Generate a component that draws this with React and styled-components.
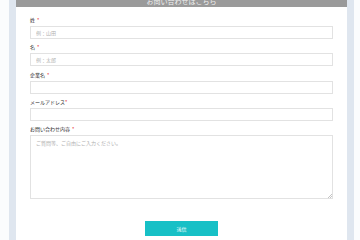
import React from "react";
import styled, { createGlobalStyle } from "styled-components";

const GlobalStyle = createGlobalStyle`
  html, body {
    margin: 0;
    padding: 0;
    background: #fbfcfd;
    font-family: "Noto Sans CJK JP", "Noto Sans", sans-serif;
  }
  * { box-sizing: border-box; }
`;

const Page = styled.div`
  width: 360px;
  height: 240px;
  overflow: hidden;
  padding-left: 9px;
`;

const Frame = styled.div`
  width: 345px;
  min-height: 240px;
  border-left: 7px solid #dfe6ef;
  border-right: 7px solid #dfe6ef;
  background: #ffffff;
`;

const Header = styled.div`
  height: 7px;
  background: #9a9a9a;
  color: #f2f2f2;
  font-size: 7px;
  line-height: 7px;
  text-align: center;
  overflow: hidden;
  span {
    display: block;
    margin-top: -2px;
  }
`;

const Form = styled.form`
  padding: 9px 14px 0 14px;
  display: flex;
  flex-direction: column;
`;

const Field = styled.div`
  display: flex;
  flex-direction: column;
  gap: 2px;
  margin-bottom: ${({ $last }) => ($last ? "22px" : "4.3px")};
`;

const Label = styled.label`
  font-size: 5px;
  line-height: 8px;
  height: 8px;
  color: #2a2a2a;
`;

const Req = styled.span`
  color: #e6232c;
  margin-left: ${({ $tight }) => ($tight ? "0" : "2px")};
`;

const Input = styled.input`
  height: 13px;
  width: 100%;
  border: 1px solid #e2e2e2;
  border-radius: 0;
  padding: 0 5px;
  font-family: inherit;
  font-size: 5px;
  color: #333;
  background: #fff;
  outline: none;
  &::placeholder { color: #b0b0b0; }
`;

const TextArea = styled.textarea`
  display: block;
  height: 64px;
  width: 100%;
  border: 1px solid #e2e2e2;
  border-radius: 0;
  padding: 3px 5px;
  font-family: inherit;
  font-size: 5px;
  line-height: 7px;
  color: #333;
  background: #fff;
  outline: none;
  resize: vertical;
  &::placeholder { color: #b0b0b0; }
  &::-webkit-resizer {
    background: linear-gradient(135deg, transparent 45%, #c4c4c4 45%, #c4c4c4 58%, transparent 58%, transparent 72%, #c4c4c4 72%, #c4c4c4 86%, transparent 86%) no-repeat right bottom / 4px 4px;
  }
`;

const Actions = styled.div`
  display: flex;
  justify-content: center;
`;

const Submit = styled.button`
  width: 73px;
  height: 15px;
  border: none;
  background: #17c0c6;
  color: #fff;
  font-family: inherit;
  font-size: 5px;
  padding: 0;
  cursor: pointer;
`;

const fields = [
  { label: "姓", placeholder: "例：山田" },
  { label: "名", placeholder: "例：太郎" },
  { label: "企業名", placeholder: "" },
  { label: "メールアドレス", placeholder: "", tight: true },
];

export default function App() {
  return (
    <>
      <GlobalStyle />
      <Page>
        <Frame>
          <Header>
            <span>お問い合わせはこちら</span>
          </Header>
          <Form onSubmit={e => e.preventDefault()}>
            {fields.map(f => (
              <Field key={f.label}>
                <Label>
                  {f.label}
                  <Req $tight={f.tight}>*</Req>
                </Label>
                <Input placeholder={f.placeholder} />
              </Field>
            ))}
            <Field $last>
              <Label>
                お問い合わせ内容
                <Req>*</Req>
              </Label>
              <TextArea placeholder="ご質問等、ご自由にご入力ください。" />
            </Field>
            <Actions>
              <Submit type="submit">送信</Submit>
            </Actions>
          </Form>
        </Frame>
      </Page>
    </>
  );
}
